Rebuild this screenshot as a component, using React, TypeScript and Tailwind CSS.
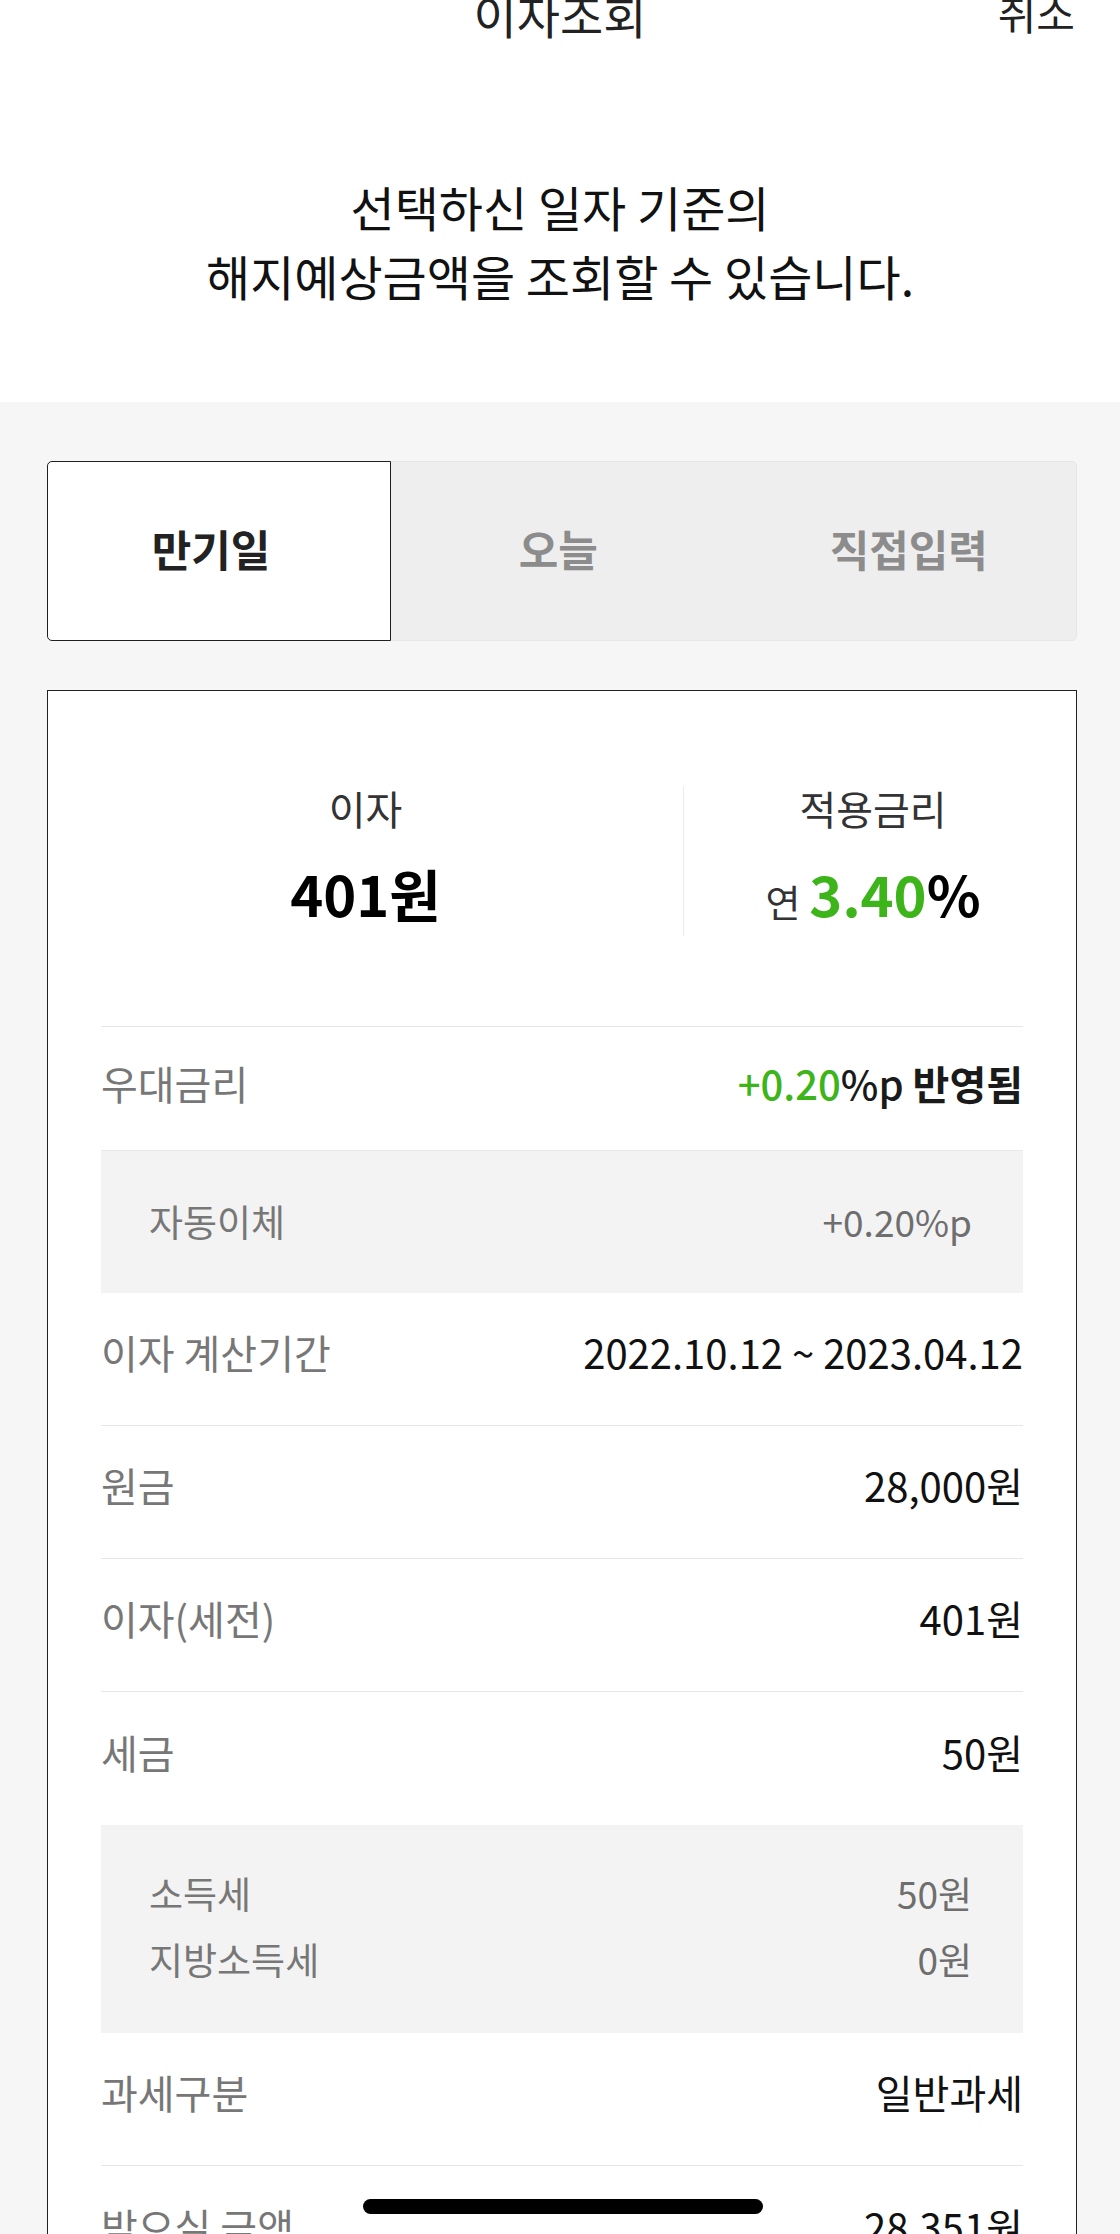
import React from 'react';

const rows: { label: string; value: string }[] = [
  { label: '이자 계산기간', value: '2022.10.12 ~ 2023.04.12' },
  { label: '원금', value: '28,000원' },
  { label: '이자(세전)', value: '401원' },
];

const Row: React.FC<{ label: string; value: React.ReactNode; border?: boolean }> = ({
  label,
  value,
  border = true,
}) => (
  <div className={`flex h-[133px] items-center justify-between pb-[14px] ${border ? 'border-b border-[#e6e6e6]' : ''}`}>
    <span className="text-[40px] text-[#777777]">{label}</span>
    <span className="text-[40px] text-[#111111]">{value}</span>
  </div>
);

const App: React.FC = () => {
  const tabs = ['만기일', '오늘', '직접입력'];

  return (
    <div className="relative h-[2234px] overflow-hidden bg-[#f6f6f6] font-['Noto_Sans_CJK_KR',sans-serif]">
      {/* top: title + guide text */}
      <section className="h-[402px] bg-white">
        <div className="grid h-[36px] grid-cols-3 items-start px-[45px]">
          <span />
          <h1 className="whitespace-nowrap text-center text-[47px] leading-[28px] text-[#222222]">이자조회</h1>
          <button className="text-right text-[42px] leading-[24px] text-[#222222]">취소</button>
        </div>
        <p className="mt-[136px] text-center text-[48px] leading-[69px] text-[#111111]">
          선택하신 일자 기준의
          <br />
          해지예상금액을 조회할 수 있습니다.
        </p>
      </section>

      <section className="pt-[59px]">
        {/* tabs */}
        <div className="ml-[47px] flex h-[180px] w-[1030px] rounded-[5px] border border-[#e6e6e6] bg-[#eeeeee]">
          {tabs.map((t, i) => (
            <div
              key={t}
              className={
                i === 0
                  ? '-my-px -ml-px flex w-[344px] items-center justify-center rounded-l-[5px] border border-[#1f1f1f] bg-white pb-[6px] pr-[16px] text-[43px] font-bold text-[#222222]'
                  : i === 1
                    ? 'flex flex-1 items-center justify-center pb-[6px] text-[43px] font-bold text-[#8c8c8c]'
                    : 'flex flex-1 items-center justify-center pb-[6px] pl-[16px] text-[43px] font-bold text-[#8c8c8c]'
              }
            >
              {t}
            </div>
          ))}
        </div>

        {/* result card */}
        <div className="ml-[47px] mt-[49px] w-[1030px] border border-[#222222] bg-white">
          <div className="flex pb-[90px] pt-[95px]">
            <div className="flex w-[635px] flex-col items-center">
              <span className="text-[40px] leading-[44px] text-[#333333]">이자</span>
              <span className="mt-[33px] text-[56px] font-bold leading-[60px] text-black">401원</span>
            </div>
            <div className="h-[150px] w-px bg-[#ebebeb]" />
            <div className="flex flex-1 flex-col items-center pr-[14px]">
              <span className="text-[40px] leading-[44px] text-[#333333]">적용금리</span>
              <span className="mt-[33px] flex items-baseline leading-[60px]">
                <span className="mr-[9px] text-[38px] text-[#333333]">연</span>
                <span className="text-[56px] font-bold text-[#3db41a]">3.40</span>
                <span className="text-[56px] font-bold text-black">%</span>
              </span>
            </div>
          </div>

          <div className="px-[53px]">
            <div className="flex h-[124px] items-center justify-between border-t border-[#e6e6e6] pb-[12px]">
              <span className="text-[40px] text-[#777777]">우대금리</span>
              <span className="text-[40px]">
                <span className="font-medium text-[#3db41a]">+0.20</span>
                <span className="font-medium text-[#1a1a1a]">%p </span>
                <span className="font-bold text-[#1a1a1a]">반영됨</span>
              </span>
            </div>
            <div className="flex h-[143px] items-center justify-between border-t border-[#e8e8e8] bg-[#f3f3f3] pl-12 pr-[51px] text-[37px] text-[#777777]">
              <span>자동이체</span>
              <span className="text-[#6e6e6e]">+0.20%p</span>
            </div>

            {rows.map((r) => (
              <Row key={r.label} label={r.label} value={r.value} />
            ))}
            <Row label="세금" value="50원" border={false} />

            <div className="bg-[#f3f3f3] pb-[41px] pl-12 pr-[51px] pt-[35px] text-[37px] leading-[66px] text-[#777777]">
              <div className="flex justify-between">
                <span>소득세</span>
                <span className="text-[#6e6e6e]">50원</span>
              </div>
              <div className="flex justify-between">
                <span>지방소득세</span>
                <span className="text-[#6e6e6e]">0원</span>
              </div>
            </div>

            <Row label="과세구분" value="일반과세" />
            <Row label="받으실 금액" value="28,351원" border={false} />
          </div>
        </div>
      </section>

      {/* home indicator */}
      <div className="absolute left-[363px] top-[2199px] h-[15px] w-[400px] rounded-full bg-black" />
    </div>
  );
};

export default App;
